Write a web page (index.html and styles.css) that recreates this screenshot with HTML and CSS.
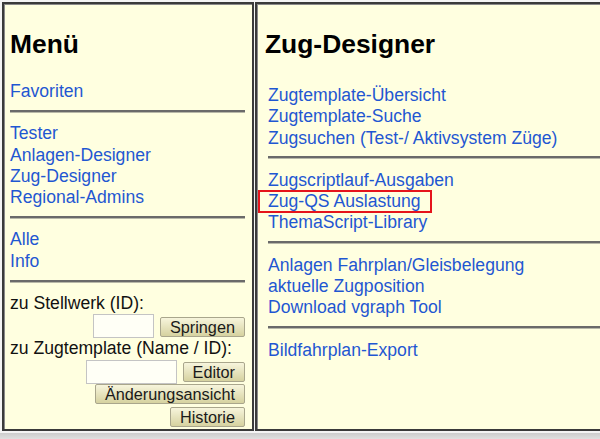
FILE: index.html
```html
<!DOCTYPE html>
<html lang="de">
<head>
    <meta charset="UTF-8">
    <meta name="viewport" content="width=device-width, initial-scale=1.0">
    <title>Zug-Designer</title>
    <link rel="stylesheet" href="styles.css">
</head>
<body>
    <div class="frames">
        <!-- linker Frame: Menü -->
        <div class="panel menu">
            <h2>Menü</h2>
            <a href="#">Favoriten</a>
            <div class="sep"></div>
            <a href="#">Tester</a>
            <a href="#">Anlagen-Designer</a>
            <a href="#">Zug-Designer</a>
            <a href="#">Regional-Admins</a>
            <div class="sep"></div>
            <a href="#">Alle</a>
            <a href="#">Info</a>
            <div class="sep"></div>

            <div class="label">zu Stellwerk (ID):</div>
            <div class="row row-first">
                <input type="text" class="field-small">
                <button>Springen</button>
            </div>
            <div class="label">zu Zugtemplate (Name / ID):</div>
            <div class="row row-second">
                <input type="text" class="field-wide">
                <button>Editor</button>
            </div>
            <div class="row row-btn">
                <button>Änderungsansicht</button>
            </div>
            <div class="row row-btn row-last">
                <button>Historie</button>
            </div>
        </div>

        <!-- rechter Frame: Inhalt -->
        <div class="panel content">
            <h2>Zug-Designer</h2>
            <div class="links">
                <a href="#">Zugtemplate-Übersicht</a>
                <a href="#">Zugtemplate-Suche</a>
                <a href="#">Zugsuchen (Test-/ Aktivsystem Züge)</a>
                <div class="sep"></div>
                <a href="#">Zugscriptlauf-Ausgaben</a>
                <a href="#"><span class="marked">Zug-QS Auslastung</span></a>
                <a href="#">ThemaScript-Library</a>
                <div class="sep"></div>
                <a href="#">Anlagen Fahrplan/Gleisbelegung</a>
                <a href="#">aktuelle Zugposition</a>
                <a href="#">Download vgraph Tool</a>
                <div class="sep"></div>
                <a href="#">Bildfahrplan-Export</a>
            </div>
        </div>
    </div>
    <div class="statusbar"></div>
</body>
</html>
```

FILE: styles.css
```css
body {
    font-family: "Liberation Sans", Arial, sans-serif;
    margin: 0;
    padding: 0;
    background-color: #f4f4f4;
    overflow: hidden;
}

.frames {
    display: flex;
    gap: 1px;
    padding: 2px 0 0 2px;
    height: 429px;
}

.panel {
    box-sizing: border-box;
    height: 429px;
    background-color: #ffffe0;
    border: 2px solid #3a3a3a;
    box-shadow: inset 1px 1px 0 #8a8a8a;
    padding-top: 25px;
}

.menu {
    width: 252px;
    flex: none;
    padding-left: 6px;
    padding-right: 7px;
}

.content {
    flex: 1;
    margin-right: -6px;
    padding-left: 8px;
}

h2 {
    font-size: 26.4px;
    line-height: 30px;
    margin: 0 0 22px;
    color: #000;
}

a {
    display: block;
    font-size: 17.6px;
    line-height: 21.3px;
    color: #1f57d2;
    text-decoration: none;
    white-space: nowrap;
}

.sep {
    border-top: 2px solid #6a6a6a;
    border-bottom: 1px solid #b8b8a8;
    margin: 7.6px 0 10.4px;
}

.links {
    padding-top: 4px;
    padding-left: 3px;
}

.marked {
    position: relative;
}

/* rote Markierung um den Eintrag */
.marked::after {
    content: "";
    position: absolute;
    left: -10px;
    right: -11px;
    top: -1px;
    bottom: -2px;
    border: 2px solid #e5141b;
}

.label {
    font-size: 17.6px;
    line-height: 21.3px;
    color: #111;
    white-space: nowrap;
}

.row {
    display: flex;
    justify-content: flex-end;
    align-items: flex-end;
    gap: 6px;
}

.row-first button {
    margin-bottom: 1px;
}

.row-second button {
    margin-bottom: 2px;
}

.row-last {
    margin-top: 3px;
}

input[type="text"] {
    box-sizing: border-box;
    height: 24px;
    border: 1px solid #c4c4c4;
    background-color: #fffff6;
    padding: 0 3px;
}

.field-small {
    width: 61px;
}

.field-wide {
    width: 91px;
}

button {
    box-sizing: border-box;
    height: 20px;
    padding: 0 9px;
    font-family: "Liberation Sans", Arial, sans-serif;
    font-size: 16.25px;
    line-height: 18px;
    color: #1a1a1a;
    background: linear-gradient(#f7f5dc, #d6d2a0);
    border: 1px solid #a9a68c;
    border-radius: 2px;
    cursor: pointer;
}

.statusbar {
    height: 6px;
    margin-top: 2px;
    background: linear-gradient(#cdcdcd, #e0e0e0);
}
```
